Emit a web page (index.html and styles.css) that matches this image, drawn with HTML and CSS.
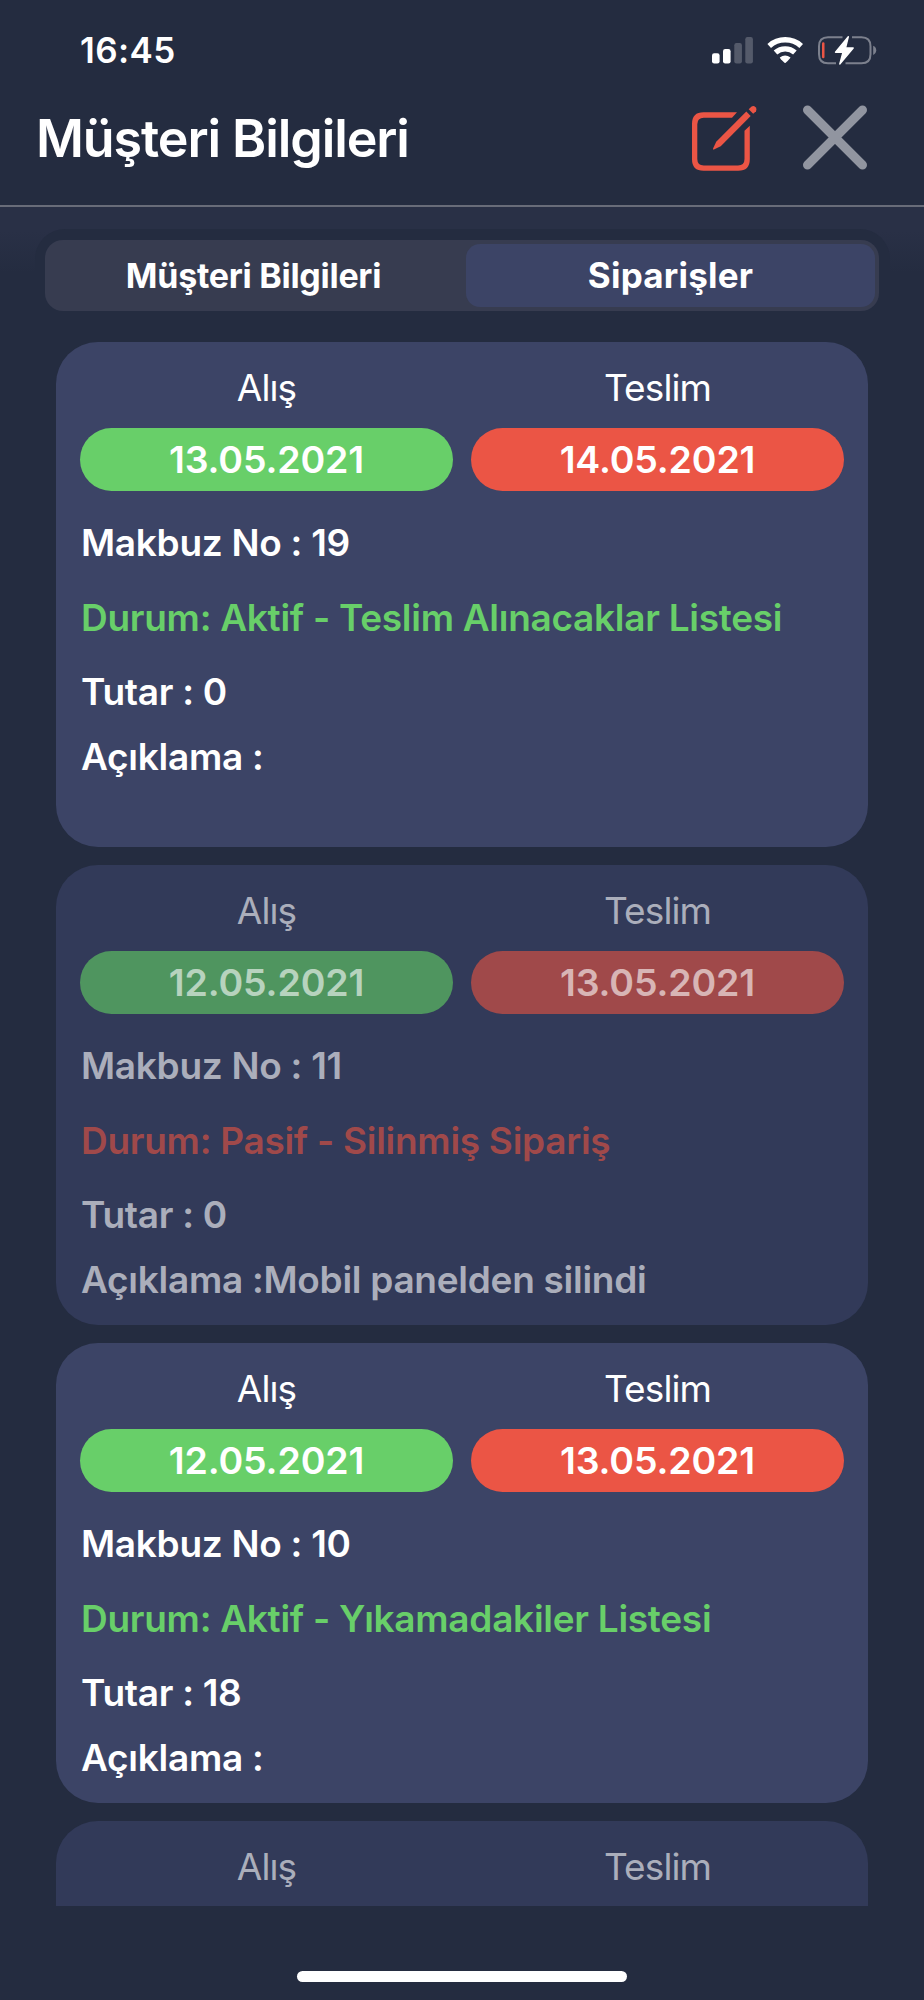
FILE: index.html
```html
<!DOCTYPE html>
<html lang="tr">
<head>
<meta charset="utf-8">
<title>Müşteri Bilgileri</title>
<link rel="stylesheet" href="styles.css">
</head>
<body>
<div class="screen">
  <header class="top">
    <div class="statusbar">
      <span class="clock">16:45</span>
      <svg class="status-icons" viewBox="708 32 172 36" aria-hidden="true">
        <g fill="#fff">
          <rect x="712" y="53.3" width="7.6" height="10.2" rx="2.2"/>
          <rect x="723" y="49" width="7.6" height="14.5" rx="2.2"/>
          <g opacity=".22">
            <rect x="734.3" y="43" width="7.6" height="20.5" rx="2.2"/>
            <rect x="745.3" y="37" width="7.6" height="26.5" rx="2.2"/>
          </g>
        </g>
        <g fill="none" stroke="#fff" stroke-width="5.4">
          <path d="M769.2 45.9A24 24 0 0 1 801.2 45.9"/>
          <path d="M775.5 52.6A14.6 14.6 0 0 1 794.9 52.6"/>
        </g>
        <path fill="#fff" d="M779.8 57.4Q785.1 53.6 790.5 57.4Q790.7 57.9 785.7 62.8Q785.1 63.3 784.5 62.8Q779.6 58 779.8 57.4Z"/>
        <path fill="none" stroke="#7c808d" stroke-width="2" d="M842.5 37.3H828Q819 37.3 819 46.3V54.3Q819 63.3 828 63.3H836M852 37.3H861.5Q870.5 37.3 870.5 46.3V54.3Q870.5 63.3 861.5 63.3H845.5"/>
        <path fill="#7c808d" d="M873.2 45.8Q876.2 47 876.2 50.3T873.2 54.9Z"/>
        <rect x="822" y="42.3" width="2.5" height="16" rx="1.2" fill="#eb5545"/>
        <path fill="#fff" stroke="#fff" stroke-width="1.4" stroke-linejoin="round" d="M848.3 36.8L835.5 52.3H843L839.8 64L853.2 48H845.5Z"/>
      </svg>
    </div>
    <div class="titlebar">
      <h1 class="title">Müşteri Bilgileri</h1>
      <svg class="title-icons" viewBox="684 98 190 80" aria-hidden="true">
        <g fill="#eb5545">
          <path d="M737 112.3H703.5Q692 112.3 692 123.8V159.3Q692 170.8 703.5 170.8H738.3Q749.8 170.8 749.8 159.3V125.8L744.5 130.8V159Q744.5 165.5 738 165.5H703.8Q697.3 165.5 697.3 159V124.2Q697.3 117.7 703.8 117.7H732Z"/>
          <path d="M746.3 111.500L750.7 115.900L720.7 146.300L713.900 149.600Q712.700 149.800 713.100 148.500L716.200 141.700Z"/>
          <path d="M748.700 109.200L751.600 106.500Q753.700 105.300 755.600 107.200Q757.500 109.200 756 111.200L753.200 113.800Z"/>
        </g>
        <path fill="none" stroke="#9195a0" stroke-width="9" stroke-linecap="round" d="M807.500 110L862.500 165M862.500 110L807.500 165"/>
      </svg>
    </div>
  </header>
  <main class="content">
    <div class="sheet">
      <nav class="segmented">
        <span class="segment">Müşteri Bilgileri</span>
        <span class="segment segment-active">Siparişler</span>
      </nav>
      <div class="orders">
        <article class="order order-tall">
          <div class="dates">
            <span class="date-label">Alış</span>
            <span class="date-label">Teslim</span>
            <span class="pill pill-green">13.05.2021</span>
            <span class="pill pill-red">14.05.2021</span>
          </div>
          <div class="details">
            <p class="row">Makbuz No : 19</p>
            <p class="row status-green">Durum: Aktif - Teslim Alınacaklar Listesi</p>
            <p class="row">Tutar : 0</p>
            <p class="row note">Açıklama :</p>
          </div>
        </article>
        <article class="order order-passive">
          <div class="dates">
            <span class="date-label">Alış</span>
            <span class="date-label">Teslim</span>
            <span class="pill pill-green">12.05.2021</span>
            <span class="pill pill-red">13.05.2021</span>
          </div>
          <div class="details">
            <p class="row">Makbuz No : 11</p>
            <p class="row status-red">Durum: Pasif - Silinmiş Sipariş</p>
            <p class="row">Tutar : 0</p>
            <p class="row note">Açıklama :Mobil panelden silindi</p>
          </div>
        </article>
        <article class="order">
          <div class="dates">
            <span class="date-label">Alış</span>
            <span class="date-label">Teslim</span>
            <span class="pill pill-green">12.05.2021</span>
            <span class="pill pill-red">13.05.2021</span>
          </div>
          <div class="details">
            <p class="row">Makbuz No : 10</p>
            <p class="row status-green">Durum: Aktif - Yıkamadakiler Listesi</p>
            <p class="row">Tutar : 18</p>
            <p class="row note">Açıklama :</p>
          </div>
        </article>
        <article class="order order-passive">
          <div class="dates">
            <span class="date-label">Alış</span>
            <span class="date-label">Teslim</span>
          </div>
        </article>
      </div>
    </div>
  </main>
  <footer class="bottom"><div class="home-indicator"></div></footer>
</div>
</body>
</html>
```
FILE: styles.css
```css
* {
  box-sizing: border-box;
}

body {
  margin: 0;
  background: #242c40;
  color: #fff;
  font-family: Inter, "Liberation Sans", sans-serif;
}

.screen {
  display: flex;
  flex-direction: column;
  width: 924px;
  height: 2000px;
  overflow: hidden;
}

.top {
  flex: none;
  height: 207px;
  border-bottom: 2px solid #686c79;
}

.statusbar {
  display: flex;
  justify-content: space-between;
  align-items: flex-start;
  height: 98px;
  padding: 32px 44px 0 80px;
}

.clock {
  font-size: 35px;
  line-height: 37px;
  font-weight: 600;
  letter-spacing: 0.4px;
}

.status-icons {
  width: 172px;
  height: 36px;
}

.titlebar {
  display: flex;
  justify-content: space-between;
  align-items: flex-start;
  padding: 0 50px 0 36px;
}

.title {
  margin: 0;
  padding-top: 11px;
  font-size: 52px;
  line-height: 60px;
  font-weight: 600;
  letter-spacing: -1.1px;
}

.title-icons {
  width: 190px;
  height: 80px;
}

.content {
  flex: none;
  padding: 22px 34px 0 35px;
  background: linear-gradient(#293046 24px, #242c40 66px);
}

.sheet {
  padding: 11px 11px 0 10px;
  border-radius: 30px 30px 0 0;
  background: #242c40;
}

.segmented {
  display: flex;
  gap: 8px;
  height: 71px;
  padding: 4px;
  border-radius: 18px;
  background: #373c50;
}

.segment {
  flex: 1 1 0;
  border-radius: 14px;
  font-size: 34px;
  line-height: 63px;
  font-weight: 700;
  letter-spacing: -0.28px;
  text-align: center;
}

.segment-active {
  background: #3c4466;
  font-size: 35px;
  letter-spacing: 0.2px;
}

.orders {
  display: flex;
  flex-direction: column;
  gap: 18px;
  height: 1564px;
  margin: 31px 11px 0;
  overflow: hidden;
}

.order {
  flex: none;
  height: 460px;
  padding: 24px 24px 0;
  border-radius: 42px;
  background: #3c4466;
}

.order-tall {
  height: 505px;
}

.dates {
  display: grid;
  grid-template-columns: 1fr 1fr;
  column-gap: 18px;
  row-gap: 18px;
  text-align: center;
}

.date-label {
  font-size: 37px;
  line-height: 44px;
  font-weight: 400;
  letter-spacing: -0.9px;
}

.pill {
  height: 63px;
  border-radius: 32px;
  font-size: 37.5px;
  line-height: 64px;
  font-weight: 600;
  letter-spacing: -0.15px;
}

.pill-green {
  background: #68cf69;
}

.pill-red {
  background: #eb5545;
}

.details {
  display: flex;
  flex-direction: column;
  gap: 30.5px;
  padding: 30px 0 0 1px;
}

.row {
  margin: 0;
  font-size: 37px;
  line-height: 44px;
  font-weight: 570;
  letter-spacing: -0.28px;
  white-space: nowrap;
}

.note {
  margin-top: -9.5px;
}

.status-green {
  color: #68cf69;
}

.order-passive {
  background: #323a59;
  color: rgba(255, 255, 255, 0.6);
}

.order-passive .pill-green {
  background: #4f955f;
}

.order-passive .pill-red {
  background: #a0494a;
}

.order-passive .status-red {
  color: #a0494a;
}

.bottom {
  display: flex;
  justify-content: center;
  padding-top: 65px;
}

.home-indicator {
  width: 330px;
  height: 11px;
  border-radius: 6px;
  background: #fff;
}
```
